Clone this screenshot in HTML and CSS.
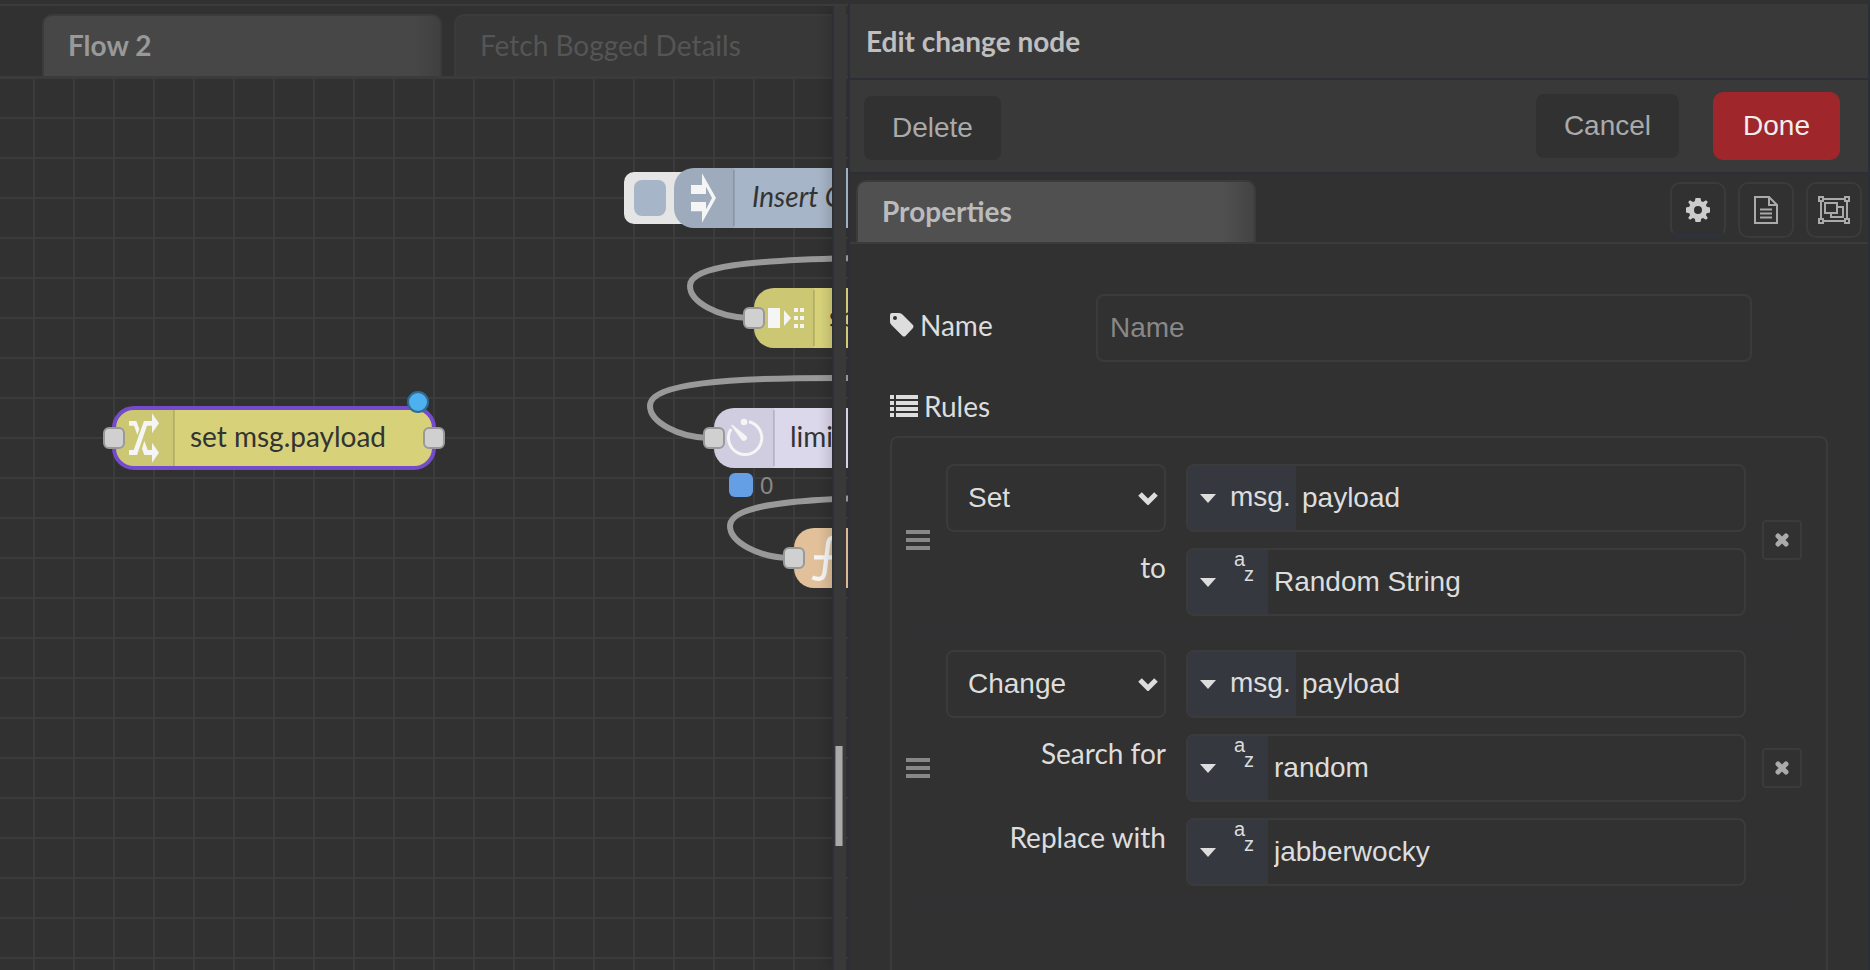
FILE: index.html
```html
<!DOCTYPE html>
<html lang="en">
<head>
<meta charset="utf-8">
<title>Flow editor</title>
<link rel="stylesheet" href="styles.css">
</head>
<body>
<main class="editor">
  <section class="workspace">
    <nav class="tabs">
      <button class="tab tab-active" type="button">Flow 2</button>
      <button class="tab tab-idle" type="button">Fetch Bogged Details</button>
    </nav>
    <div class="canvas">
      <svg class="chart" width="100%" height="100%" aria-label="Flow chart">
        <defs>
          <pattern id="grid" x="33" y="39" width="40" height="40" patternUnits="userSpaceOnUse">
            <path class="grid-line" d="M0 1H40M1 0V40"/>
          </pattern>
        </defs>
        <rect width="100%" height="100%" fill="url(#grid)"/>
        <g transform="translate(0 -78)">
          <g class="wires">
            <path d="M860 258C750 260 690 266 690 286C690 302 718 317 748 318"/>
            <path d="M860 378C720 377 650 384 650 406C650 422 678 437 708 438"/>
            <path d="M860 498C790 500 730 506 730 526C730 542 758 557 788 558"/>
          </g>

          <rect x="624" y="172" width="70" height="52" rx="10" fill="#e5e5e5"/>
          <rect x="634" y="180" width="32" height="36" rx="8" fill="#a6b5c7"/>
          <rect x="674" y="168" width="240" height="60" rx="20" fill="#a6b5c7"/>
          <path class="shade" d="M734 168H694A20 20 0 0 0 674 188V208A20 20 0 0 0 694 228H734Z"/>
          <path class="rule-line" d="M734 170V226"/>
          <svg class="glyph" x="690" y="173" width="28" height="50" viewBox="780 519 84 150">
            <path d="M783 555H816V520L858 594L816 668V634H783V606H828V628L846 594L828 560V582H783Z"/>
          </svg>
          <text class="node-label node-label-italic" x="752" y="207">Insert C</text>

          <rect x="754" y="288" width="200" height="60" rx="20" fill="#d7d27a"/>
          <path class="shade" d="M814 288H774A20 20 0 0 0 754 308V328A20 20 0 0 0 774 348H814Z"/>
          <path class="rule-line" d="M814 290V346"/>
          <svg class="glyph" x="768" y="308" width="36" height="20" viewBox="504 474 108 60">
            <path d="M504 474H540V534H504ZM552 481L573 504L552 528ZM582 474h12v12h-12zM600 474h12v12h-12zM582 498h12v12h-12zM600 498h12v12h-12zM582 522h12v12h-12zM600 522h12v12h-12z"/>
          </svg>
          <text class="node-label" x="829" y="327">split</text>
          <rect class="port" x="744" y="308" width="20" height="20" rx="5"/>

          <rect x="714" y="408" width="240" height="60" rx="20" fill="#dcd8ec"/>
          <path class="shade" d="M774 408H734A20 20 0 0 0 714 428V448A20 20 0 0 0 734 468H774Z"/>
          <path class="rule-line" d="M774 410V466"/>
          <svg x="724" y="416" width="42" height="42" viewBox="372 168 126 126">
            <path d="M447 185A50 50 0 1 1 393 207" fill="none" stroke="#f5f5f5" stroke-width="9"/>
            <circle cx="432" cy="186" r="10" fill="#f5f5f5"/>
            <path d="M393 196Q395 193 399 196L438 227A9 9 0 0 1 425 240Z" fill="#f5f5f5"/>
          </svg>
          <text class="node-label" x="790" y="447">limit 1 msg/s</text>
          <rect class="port" x="704" y="428" width="20" height="20" rx="5"/>
          <rect x="729" y="473" width="24" height="24" rx="6" fill="#649ee5"/>
          <text class="status" x="760" y="494">0</text>

          <rect x="794" y="528" width="200" height="60" rx="20" fill="#e1c09a"/>
          <svg x="808" y="530" width="40" height="56" viewBox="624 510 120 168">
            <path d="M708 536C690 529 686 538 684 554L674 636C671 658 656 661 637 652M642 592H708" fill="none" stroke="#f5f5f5" stroke-width="13"/>
          </svg>
          <rect class="port" x="784" y="548" width="20" height="20" rx="5"/>

          <rect x="114" y="408" width="320" height="60" rx="20" fill="#d7d27a"/>
          <path class="shade" d="M174 408H134A20 20 0 0 0 114 428V448A20 20 0 0 0 134 468H174Z"/>
          <path class="rule-line" d="M174 410V466"/>
          <rect x="114" y="408" width="320" height="60" rx="20" fill="none" stroke="#744bcb" stroke-width="4"/>
          <svg class="glyph" x="128" y="413" width="32" height="50" viewBox="114 129 96 150">
            <path d="M117 240H131L162 153H186V130L207 160L186 190V167H171L141 255H117ZM117 153H139L148 177L142 195L132 167H117ZM163 212L173 240H186V218L207 248L186 278V255H163L156 236Z"/>
          </svg>
          <text class="node-label" x="190" y="447">set msg.payload</text>
          <rect class="port" x="104" y="428" width="20" height="20" rx="5"/>
          <rect class="port" x="424" y="428" width="20" height="20" rx="5"/>
          <circle cx="418" cy="402" r="10" fill="#4eb0ee" stroke="#2e6c93" stroke-width="2"/>
        </g>
      </svg>
    </div>
    <div class="separator"><span class="scroll-thumb"></span></div>
  </section>

  <section class="tray">
    <header class="tray-title"><h1>Edit change node</h1></header>
    <div class="toolbar">
      <button class="btn" type="button">Delete</button>
      <div class="toolbar-end">
        <button class="btn" type="button">Cancel</button>
        <button class="btn btn-primary" type="button">Done</button>
      </div>
    </div>
    <nav class="tray-tabs">
      <button class="tab tab-props" type="button">Properties</button>
      <div class="icon-tabs">
        <button class="icon-tab icon-tab-on" type="button" aria-label="Properties">
          <svg width="26" height="26" viewBox="-13 -13 26 26" fill="#ccc">
            <path fill-rule="evenodd" d="M-2.500-12H2.500L3.200-8.700L5.100-7.900L8-9.800L9.800-8L7.900-5.100L8.700-3.200L12-2.500V2.500L8.700 3.200L7.900 5.100L9.800 8L8 9.800L5.100 7.900L3.200 8.700L2.500 12H-2.500L-3.200 8.700L-5.100 7.900L-8 9.800L-9.800 8L-7.900 5.100L-8.700 3.200L-12 2.500V-2.500L-8.700-3.200L-7.900-5.100L-9.800-8L-8-9.800L-5.100-7.900L-3.200-8.700ZM0-4A4 4 0 1 0 0 4A4 4 0 1 0 0-4Z"/>
          </svg>
        </button>
        <button class="icon-tab" type="button" aria-label="Description">
          <svg width="26" height="28" viewBox="0 0 26 28" fill="none" stroke="#aaa" stroke-width="2">
            <path d="M2 1H16L24 9V27H2ZM16 1V9H24M7 13.500H19M7 17.500H19M7 21.500H19"/>
          </svg>
        </button>
        <button class="icon-tab" type="button" aria-label="Appearance">
          <svg width="32" height="28" viewBox="0 0 32 28" fill="none" stroke="#aaa" stroke-width="2">
            <path d="M6 3H26M6 25H26M3 6V22M29 6V22M1 1H5V5H1ZM27 1H31V5H27ZM1 23H5V27H1ZM27 23H31V27H27ZM7 7H19V17H7ZM19 11H25V21H13V17"/>
          </svg>
        </button>
      </div>
    </nav>

    <form class="form">
      <div class="name-row">
        <label class="label" for="name">
          <svg width="24" height="24" viewBox="0 0 24 24"><path fill="#ddd" fill-rule="evenodd" d="M0 2Q0 0 2 0H9Q11 0 13 2L23 12Q24 13.500 23 15L15.500 23Q14 24 12.500 23L2 12.500Q0 10.500 0 9ZM5 3A2 2 0 1 0 5 7A2 2 0 1 0 5 3Z"/></svg>
          <span>Name</span>
        </label>
        <input class="field name-field" id="name" type="text" placeholder="Name">
      </div>
      <div class="label rules-label">
        <svg width="28" height="22" viewBox="0 0 28 22" fill="#ddd"><path d="M0 0h4v4H0zM6 0h22v4H6zM0 6h4v4H0zM6 6h22v4H6zM0 12h4v4H0zM6 12h22v4H6zM0 18h4v4H0zM6 18h22v4H6z"/></svg>
        <span>Rules</span>
      </div>
      <ol class="rules">
        <li class="rule">
          <svg class="handle" width="24" height="20" viewBox="0 0 24 20"><path d="M0 0h24v4H0zM0 8h24v4H0zM0 16h24v4H0z"/></svg>
          <div class="rule-fields">
            <div class="select">
              <select aria-label="Action"><option>Set</option><option>Change</option></select>
              <svg class="chevron" width="20" height="14" viewBox="0 0 20 14"><path d="M2 3L10 11L18 3"/></svg>
            </div>
            <div class="typed">
              <button class="type type-msg" type="button"><i class="caret"></i><span>msg.</span></button>
              <input type="text" aria-label="Property" value="payload">
            </div>
            <label class="row-label" for="r1-to">to</label>
            <div class="typed">
              <button class="type type-str" type="button" aria-label="String"><i class="caret"></i><span class="az"><span>a</span><span>z</span></span></button>
              <input id="r1-to" type="text" value="Random String">
            </div>
          </div>
          <button class="remove" type="button" aria-label="Remove rule"><svg width="14" height="14" viewBox="0 0 14 14"><path d="M3 3L11 11M11 3L3 11"/></svg></button>
        </li>
        <li class="rule">
          <svg class="handle" width="24" height="20" viewBox="0 0 24 20"><path d="M0 0h24v4H0zM0 8h24v4H0zM0 16h24v4H0z"/></svg>
          <div class="rule-fields">
            <div class="select">
              <select aria-label="Action"><option>Set</option><option selected>Change</option></select>
              <svg class="chevron" width="20" height="14" viewBox="0 0 20 14"><path d="M2 3L10 11L18 3"/></svg>
            </div>
            <div class="typed">
              <button class="type type-msg" type="button"><i class="caret"></i><span>msg.</span></button>
              <input type="text" aria-label="Property" value="payload">
            </div>
            <label class="row-label" for="r2-from">Search for</label>
            <div class="typed">
              <button class="type type-str" type="button" aria-label="String"><i class="caret"></i><span class="az"><span>a</span><span>z</span></span></button>
              <input id="r2-from" type="text" value="random">
            </div>
            <label class="row-label" for="r2-to">Replace with</label>
            <div class="typed">
              <button class="type type-str" type="button" aria-label="String"><i class="caret"></i><span class="az"><span>a</span><span>z</span></span></button>
              <input id="r2-to" type="text" value="jabberwocky">
            </div>
          </div>
          <button class="remove" type="button" aria-label="Remove rule"><svg width="14" height="14" viewBox="0 0 14 14"><path d="M3 3L11 11M11 3L3 11"/></svg></button>
        </li>
      </ol>
    </form>
  </section>
</main>
</body>
</html>
```

FILE: styles.css
```css
:root {
  --bg: #313131;
  --raised: #393939;
  --line: #3b3b3b;
  --edge: #2c3036;
  --text: #ddd;
  --ui: Lato, "Open Sans", sans-serif;
  --control: "Liberation Sans", Arial, sans-serif;
}

* {
  box-sizing: border-box;
}

body {
  margin: 0;
  background: var(--bg);
  color: var(--text);
  font: 28px/36px var(--ui);
}

button,
input,
select {
  margin: 0;
  border: 0;
  background: none;
  color: inherit;
  font: 28px/36px var(--control);
}

.editor {
  display: grid;
  grid-template-columns: minmax(0, 848fr) minmax(0, 1022fr);
  min-height: 100vh;
  padding-top: 4px;
}

/* Workspace */
.workspace {
  position: relative;
  display: flex;
  flex-direction: column;
  min-width: 0;
  overflow: hidden;
  border-top: 2px solid var(--line);
}

.tabs {
  display: flex;
  gap: 12px;
  height: 72px;
  padding: 8px 0 0 42px;
  border-bottom: 2px solid var(--line);
}

.tab {
  flex: none;
  width: 400px;
  padding: 0 24px 2px;
  border: 2px solid var(--line);
  border-bottom: 0;
  border-radius: 10px 10px 0 0;
  font: 28px/36px var(--ui);
  text-align: left;
  white-space: nowrap;
}

.tab-active {
  background: linear-gradient(to left, #404040, #474747 26px);
  color: #999;
  font-weight: 700;
}

.tab-idle {
  background: #383838;
  color: #555;
}

.canvas {
  position: relative;
  flex: 1;
}

.chart {
  position: absolute;
  inset: 0;
}

.grid-line {
  stroke: #3b3b3b;
  stroke-width: 2;
}

.wires {
  fill: none;
  stroke: #999;
  stroke-width: 6;
}

.shade {
  fill: #000;
  fill-opacity: 0.05;
}

.rule-line {
  stroke: #000;
  stroke-opacity: 0.12;
  stroke-width: 2;
}

.glyph {
  fill: #f5f5f5;
}

.port {
  fill: #d0d0d0;
  stroke: #999;
  stroke-width: 2;
}

.node-label {
  fill: #333;
  font: 28px var(--ui);
}

.node-label-italic {
  font-style: italic;
}

.status {
  fill: #888;
  font: 24px var(--control);
}

.separator {
  position: absolute;
  top: 0;
  right: 2px;
  bottom: 0;
  width: 14px;
  border-left: 2px solid var(--edge);
  background: var(--raised);
  box-shadow: -4px 0 12px rgba(0, 0, 0, 0.15);
}

.scroll-thumb {
  position: absolute;
  top: 740px;
  left: 1px;
  width: 8px;
  height: 100px;
  border: solid #777;
  border-width: 0 1px;
  background: #aaa;
}

/* Edit tray */
.tray {
  display: flex;
  flex-direction: column;
  min-width: 0;
  border: solid var(--edge);
  border-width: 0 2px;
}

.tray-title {
  padding: 19px 16px;
  border-bottom: 2px solid var(--edge);
  background: var(--raised);
}

.tray-title h1 {
  margin: 0;
  color: #bfbfbf;
  font: 700 28px/36px var(--ui);
}

.toolbar {
  display: flex;
  align-items: flex-end;
  justify-content: space-between;
  padding: 12px 28px 12px 14px;
  border-bottom: 2px solid var(--edge);
  background: var(--raised);
}

.toolbar-end {
  display: flex;
  align-items: center;
  gap: 34px;
}

.btn {
  padding: 14px 28px;
  border-radius: 8px;
  background: var(--bg);
  color: #aaa;
}

.btn-primary {
  padding: 16px 30px;
  border-radius: 10px;
  background: #9f272b;
  color: #eee;
}

.tray-tabs {
  display: flex;
  justify-content: space-between;
  padding: 6px 6px 0;
  border-bottom: 2px solid var(--line);
}

.tab-props {
  height: 62px;
  background: linear-gradient(to left, #434343, #505050 30px);
  color: #bbb;
  font-weight: 700;
}

.icon-tabs {
  display: flex;
  gap: 12px;
  padding-top: 2px;
}

.icon-tab {
  display: grid;
  place-items: center;
  width: 56px;
  height: 56px;
  padding: 0;
  border: 2px solid var(--line);
  border-radius: 10px;
}

.icon-tab-on {
  padding-top: 2px;
  border-bottom: 4px solid #2e323b;
}

.form {
  display: flex;
  flex: 1;
  flex-direction: column;
  padding: 50px 40px 0;
}

.name-row {
  display: grid;
  grid-template-columns: 206px minmax(0, 1fr);
  align-items: center;
  padding-right: 76px;
}

.label {
  display: flex;
  align-items: center;
  gap: 6px;
  padding-bottom: 6px;
}

.field {
  height: 68px;
  padding: 0 12px;
  border: 2px solid var(--line);
  border-radius: 8px;
}

.name-field::placeholder {
  color: #888;
  opacity: 1;
}

.rules-label {
  padding: 26px 0 12px;
}

.rules {
  flex: 1;
  margin: 0;
  padding: 10px 24px 0 10px;
  border: 2px solid var(--line);
  border-bottom: 0;
  border-radius: 8px 8px 0 0;
  list-style: none;
}

.rule {
  display: flex;
  align-items: center;
  gap: 16px;
  padding: 16px 0 16px 4px;
  border-bottom: 2px solid #2e3237;
}

.handle {
  flex: none;
  fill: #888;
}

.rule-fields {
  display: grid;
  flex: 1;
  grid-template-columns: 220px minmax(0, 1fr);
  gap: 16px 20px;
}

.row-label {
  line-height: 38px;
  text-align: right;
}

.select {
  position: relative;
}

.select select {
  width: 100%;
  height: 68px;
  padding: 0 20px;
  border: 2px solid var(--line);
  border-radius: 8px;
  appearance: none;
}

.chevron {
  position: absolute;
  top: 27px;
  right: 8px;
  fill: none;
  stroke: var(--text);
  stroke-width: 5;
  pointer-events: none;
}

.typed {
  display: flex;
  height: 68px;
  overflow: hidden;
  border: 2px solid var(--line);
  border-radius: 8px;
}

.typed input {
  flex: 1;
  min-width: 0;
  padding: 0 6px;
}

.type {
  display: flex;
  flex: none;
  align-items: center;
  padding: 0 0 0 12px;
  background: #363840;
}

.type-msg {
  gap: 14px;
  width: 108px;
}

.type-msg span {
  padding-bottom: 2px;
}

.type-str {
  gap: 18px;
  width: 80px;
}

.caret {
  border: solid transparent;
  border-width: 9px 8px 0;
  border-top-color: var(--text);
}

.az {
  display: grid;
  grid-template-columns: 10px 10px;
  grid-template-rows: 15px 20px;
  align-self: flex-start;
  font-size: 20px;
  line-height: 18px;
}

.az span:last-child {
  grid-area: 2 / 2;
}

.remove {
  display: grid;
  flex: none;
  place-items: center;
  width: 40px;
  height: 40px;
  padding: 0;
  border: 2px solid var(--line);
  border-radius: 4px;
}

.remove svg {
  fill: none;
  stroke: #aaa;
  stroke-linecap: round;
  stroke-width: 5;
}
```
